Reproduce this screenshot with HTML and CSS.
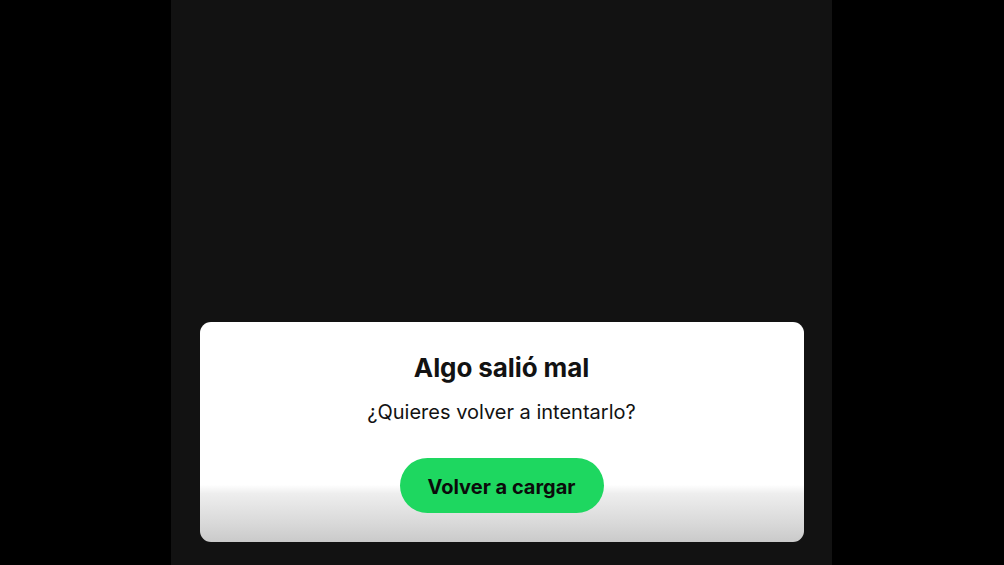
FILE: index.html
```html
<!DOCTYPE html>
<html lang="es">
<head>
<meta charset="utf-8">
<title>Algo salió mal</title>
<link rel="stylesheet" href="styles.css">
</head>
<body>
<div class="stage">
  <div class="column">
    <div class="card">
      <h1 class="title">Algo salió mal</h1>
      <p class="subtitle">¿Quieres volver a intentarlo?</p>
      <button class="reload">Volver a cargar</button>
    </div>
  </div>
</div>
</body>
</html>
```
FILE: styles.css
```css
html, body {
  margin: 0;
  padding: 0;
  background: #000;
  height: 100%;
}
.stage {
  display: flex;
  justify-content: flex-start;
  height: 565px;
  padding-left: 171px;
  box-sizing: border-box;
}
.column {
  width: 661px;
  height: 100%;
  background: #121212;
  display: flex;
  flex-direction: column;
  justify-content: flex-end;
  align-items: center;
  padding-bottom: 23px;
  box-sizing: border-box;
}
.card {
  width: 604px;
  height: 220px;
  box-sizing: border-box;
  border-radius: 11px;
  background: linear-gradient(to bottom, #ffffff 0%, #ffffff 74%, #eeeeee 78%, #d8d8d8 92%, #cacaca 100%);
  display: flex;
  flex-direction: column;
  align-items: center;
  padding-top: 31px;
  font-family: "Inter", "Noto Sans", sans-serif;
  color: #121212;
}
.title {
  margin: 0;
  font-size: 26px;
  font-weight: 700;
  line-height: 30px;
  letter-spacing: -0.1px;
}
.subtitle {
  margin: 17px 0 0 0;
  font-size: 20px;
  font-weight: 400;
  line-height: 24px;
}
.reload {
  margin-top: 34px;
  width: 204px;
  height: 55px;
  padding-top: 3px;
  border: none;
  border-radius: 28px;
  background: #1ed760;
  color: #0b0b0b;
  font-family: "Inter", "Noto Sans", sans-serif;
  font-size: 20px;
  font-weight: 700;
  cursor: pointer;
}
```
